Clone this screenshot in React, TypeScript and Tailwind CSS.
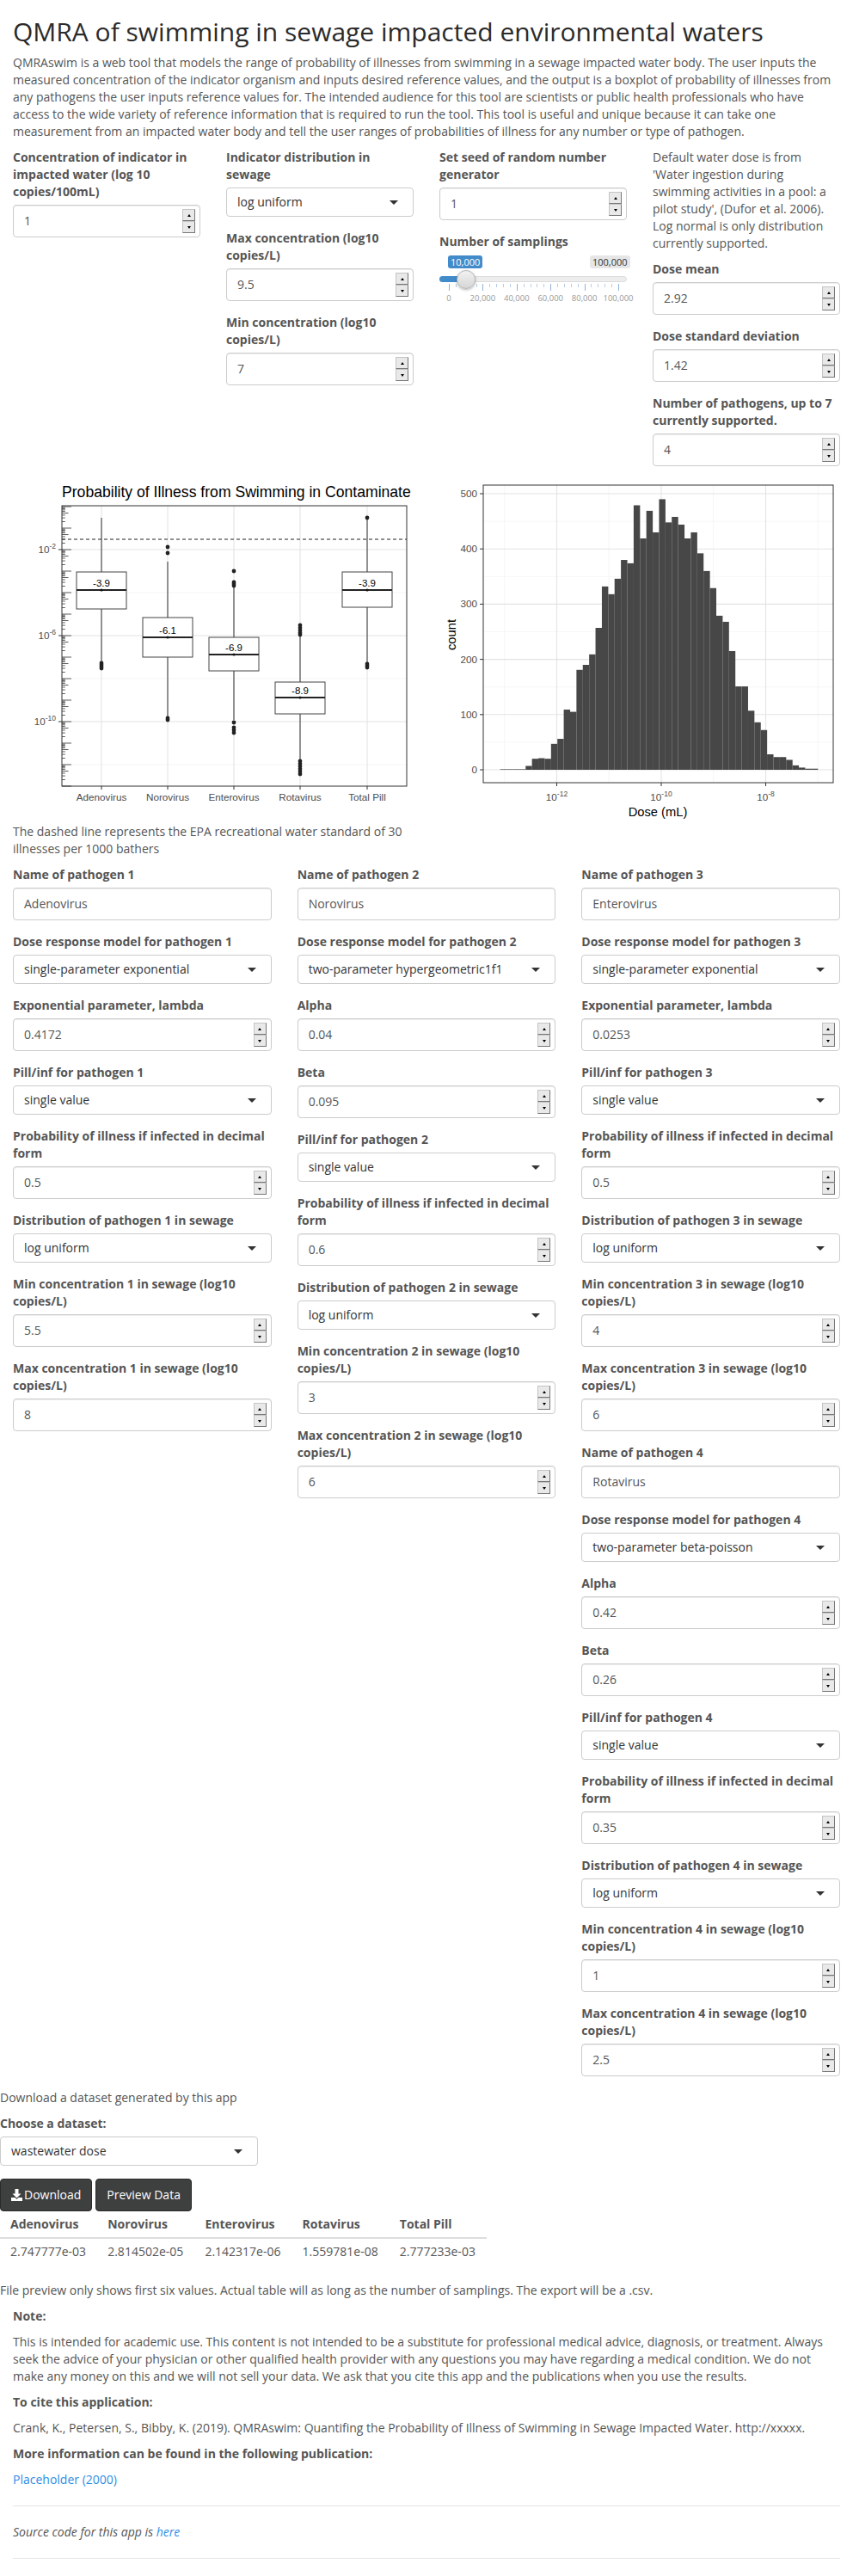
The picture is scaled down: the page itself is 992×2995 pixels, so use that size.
import React from 'react';

type Field = { kind: 'text' | 'num' | 'select'; label: string; value: string };

const Spinner = () => (
  <div className="absolute right-[5px] top-[4px] flex flex-col">
    <span className="w-[15px] h-[14px] flex items-center justify-center bg-[#e9e9e9] border border-[#c4c4c4] border-r-[#777] border-b-[#777]">
      <span className="w-0 h-0 border-x-[2px] border-b-[3px] border-x-transparent border-b-black" />
    </span>
    <span className="w-[15px] h-[14px] flex items-center justify-center bg-[#e9e9e9] border border-[#c4c4c4] border-r-[#777] border-b-[#777]">
      <span className="w-0 h-0 border-x-[2px] border-t-[3px] border-x-transparent border-t-black" />
    </span>
  </div>
);

const FieldLabel = ({ children }: { children: React.ReactNode }) => (
  <label className="block mb-[5px] font-bold text-[#555]">{children}</label>
);

const InputBox = ({ value, spinner }: { value: string; spinner?: boolean }) => (
  <div className="relative h-[38px] flex items-center px-[12px] bg-white border border-[#ccc] rounded-[4px] shadow-[inset_0_1px_1px_rgba(0,0,0,0.075)] text-[#555]">
    {value}
    {spinner && <Spinner />}
  </div>
);

const SelectBox = ({ value }: { value: string }) => (
  <div className="h-[34px] flex items-center justify-between pl-[12px] pr-[17px] bg-white border border-[#ccc] rounded-[4px] text-[#333]">
    <span>{value}</span>
    <span className="w-0 h-0 border-x-[5px] border-t-[5px] border-x-transparent border-t-[#333]" />
  </div>
);

const FormField = ({ f }: { f: Field }) => (
  <div className="mb-[15px]">
    <FieldLabel>{f.label}</FieldLabel>
    {f.kind === 'select' ? <SelectBox value={f.value} /> : <InputBox value={f.value} spinner={f.kind === 'num'} />}
  </div>
);

const col1: Field[] = [
  { kind: 'text', label: 'Name of pathogen 1', value: 'Adenovirus' },
  { kind: 'select', label: 'Dose response model for pathogen 1', value: 'single-parameter exponential' },
  { kind: 'num', label: 'Exponential parameter, lambda', value: '0.4172' },
  { kind: 'select', label: 'Pill/inf for pathogen 1', value: 'single value' },
  { kind: 'num', label: 'Probability of illness if infected in decimal form', value: '0.5' },
  { kind: 'select', label: 'Distribution of pathogen 1 in sewage', value: 'log uniform' },
  { kind: 'num', label: 'Min concentration 1 in sewage (log10 copies/L)', value: '5.5' },
  { kind: 'num', label: 'Max concentration 1 in sewage (log10 copies/L)', value: '8' },
];

const col2: Field[] = [
  { kind: 'text', label: 'Name of pathogen 2', value: 'Norovirus' },
  { kind: 'select', label: 'Dose response model for pathogen 2', value: 'two-parameter hypergeometric1f1' },
  { kind: 'num', label: 'Alpha', value: '0.04' },
  { kind: 'num', label: 'Beta', value: '0.095' },
  { kind: 'select', label: 'Pill/inf for pathogen 2', value: 'single value' },
  { kind: 'num', label: 'Probability of illness if infected in decimal form', value: '0.6' },
  { kind: 'select', label: 'Distribution of pathogen 2 in sewage', value: 'log uniform' },
  { kind: 'num', label: 'Min concentration 2 in sewage (log10 copies/L)', value: '3' },
  { kind: 'num', label: 'Max concentration 2 in sewage (log10 copies/L)', value: '6' },
];

const col3: Field[] = [
  { kind: 'text', label: 'Name of pathogen 3', value: 'Enterovirus' },
  { kind: 'select', label: 'Dose response model for pathogen 3', value: 'single-parameter exponential' },
  { kind: 'num', label: 'Exponential parameter, lambda', value: '0.0253' },
  { kind: 'select', label: 'Pill/inf for pathogen 3', value: 'single value' },
  { kind: 'num', label: 'Probability of illness if infected in decimal form', value: '0.5' },
  { kind: 'select', label: 'Distribution of pathogen 3 in sewage', value: 'log uniform' },
  { kind: 'num', label: 'Min concentration 3 in sewage (log10 copies/L)', value: '4' },
  { kind: 'num', label: 'Max concentration 3 in sewage (log10 copies/L)', value: '6' },
  { kind: 'text', label: 'Name of pathogen 4', value: 'Rotavirus' },
  { kind: 'select', label: 'Dose response model for pathogen 4', value: 'two-parameter beta-poisson' },
  { kind: 'num', label: 'Alpha', value: '0.42' },
  { kind: 'num', label: 'Beta', value: '0.26' },
  { kind: 'select', label: 'Pill/inf for pathogen 4', value: 'single value' },
  { kind: 'num', label: 'Probability of illness if infected in decimal form', value: '0.35' },
  { kind: 'select', label: 'Distribution of pathogen 4 in sewage', value: 'log uniform' },
  { kind: 'num', label: 'Min concentration 4 in sewage (log10 copies/L)', value: '1' },
  { kind: 'num', label: 'Max concentration 4 in sewage (log10 copies/L)', value: '2.5' },
];

// slider: 0..100,000, value 10,000
const SamplingSlider = () => {
  const ticks: React.ReactNode[] = [];
  for (let i = 0; i <= 25; i++) {
    const x = 11 + i * 7.88;
    const major = i % 5 === 0;
    ticks.push(
      <span
        key={i}
        className={major ? 'absolute top-[34px] w-px h-[8px] bg-[#8fb4dc]' : 'absolute top-[34px] w-px h-[4px] bg-[#b6cde6]'}
        style={{ left: x }}
      />
    );
  }
  const labels = ['0', '20,000', '40,000', '60,000', '80,000', '100,000'];
  return (
    <div className="relative h-[60px]">
      <span className="absolute left-[10px] top-[1px] h-[15px] px-[3px] flex items-center rounded-[3px] bg-[#428bca] text-white text-[11px] leading-none">10,000</span>
      <span className="absolute left-[175px] top-[1px] h-[15px] px-[3px] flex items-center rounded-[3px] bg-[#e6e6e6] text-[#333] text-[11px] leading-none">100,000</span>
      <div className="absolute left-0 right-0 top-[25px] h-[7px] rounded-full bg-[#ededed] border border-[#dcdcdc]" />
      <div className="absolute left-0 w-[31px] top-[25px] h-[7px] rounded-l-full bg-[#428bca]" />
      {ticks}
      {labels.map((l, i) => (
        <span key={l} className="absolute top-[45px] w-[50px] -ml-[25px] text-center text-[9.5px] leading-[12px] text-[#999]" style={{ left: 11 + i * 39.4 }}>
          {l}
        </span>
      ))}
      <div className="absolute left-[20px] top-[18px] w-[22px] h-[22px] rounded-full bg-gradient-to-b from-[#f2f2f2] to-[#d6d6d6] border border-[#b5b5b5] shadow-[0_1px_3px_rgba(0,0,0,0.3)]" />
    </div>
  );
};

const SupLabel = ({ x, y, exp, anchor }: { x: number; y: number; exp: string; anchor: 'end' | 'middle' }) => (
  <text x={x} y={y} textAnchor={anchor} fontSize={11.7} fill="#4d4d4d" fontFamily="Liberation Sans, Arial, sans-serif">
    10
    <tspan dy={-5} fontSize={8.5}>
      {exp}
    </tspan>
  </text>
);

type Box = { x: number; top: number; bot: number; med: number; wt: number; wb: number; out: number[]; label: string };

const boxes: Box[] = [
  { x: 103, top: 108, bot: 151, med: 129, wt: 45, wb: 212, out: [214, 216, 218, 220], label: '-3.9' },
  { x: 180, top: 161, bot: 207, med: 184, wt: 96, wb: 276, out: [79, 86, 278, 280], label: '-6.1' },
  { x: 257, top: 184, bot: 223, med: 204, wt: 126, wb: 280, out: [107, 120, 122, 124, 283, 289, 292, 295], label: '-6.9' },
  { x: 334, top: 236, bot: 273, med: 254, wt: 182, wb: 326, out: [170, 173, 176, 179, 181, 328, 331, 334, 337, 340, 343], label: '-8.9' },
  { x: 412, top: 108, bot: 149, med: 129, wt: 45, wb: 213, out: [45, 215, 217, 219], label: '-3.9' },
];

const BoxPlot = () => {
  const LY = (l: number) => 32 - 25 * l;
  const logTicks: React.ReactNode[] = [];
  for (let d = 0; d >= -13; d--) {
    for (let k = 1; k <= 9; k++) {
      const y = LY(d + Math.log10(k));
      if (y < 31 || y > 357) continue;
      const len = k === 1 ? 11 : k === 5 ? 7.5 : 3.8;
      logTicks.push(<line key={`${d}-${k}`} x1={57} x2={57 + len} y1={y} y2={y} stroke="#333" strokeWidth={0.8} />);
    }
  }
  const names = ['Adenovirus', 'Norovirus', 'Enterovirus', 'Rotavirus', 'Total Pill'];
  return (
    <svg width={466} height={400} className="block overflow-hidden">
      <rect x={0} y={0} width={466} height={400} fill="white" />
      <text x={57} y={21} fontSize={17.6} fill="#000" fontFamily="Liberation Sans, Arial, sans-serif">
        Probability of Illness from Swimming in Contaminate
      </text>
      {[32, 132, 232, 332].map((y) => (
        <line key={`mi${y}`} x1={57} x2={458} y1={y} y2={y} stroke="#f0f0f0" strokeWidth={0.6} />
      ))}
      {[82, 182, 282].map((y) => (
        <line key={`ma${y}`} x1={57} x2={458} y1={y} y2={y} stroke="#e3e3e3" strokeWidth={1.1} />
      ))}
      {boxes.map((b) => (
        <line key={`v${b.x}`} x1={b.x} x2={b.x} y1={31} y2={357} stroke="#e3e3e3" strokeWidth={1.1} />
      ))}
      <line x1={57} x2={458} y1={70} y2={70} stroke="#222" strokeWidth={1} strokeDasharray="4 3" />
      {boxes.map((b) => (
        <g key={b.label + b.x}>
          <line x1={b.x} x2={b.x} y1={b.wt} y2={b.top} stroke="#333" strokeWidth={1} />
          <line x1={b.x} x2={b.x} y1={b.bot} y2={b.wb} stroke="#333" strokeWidth={1} />
          <rect x={b.x - 29} y={b.top} width={58} height={b.bot - b.top} fill="white" stroke="#444" strokeWidth={1} />
          <line x1={b.x - 29} x2={b.x + 29} y1={b.med} y2={b.med} stroke="#222" strokeWidth={2} />
          <circle cx={b.x} cy={b.med} r={1.6} fill="#111" />
          {b.out.map((o, i) => (
            <circle key={i} cx={b.x} cy={o} r={2.4} fill="#222" />
          ))}
          <text x={b.x} y={b.med - 4} textAnchor="middle" fontSize={11.5} fill="#000" fontFamily="Liberation Sans, Arial, sans-serif">
            {b.label}
          </text>
        </g>
      ))}
      {logTicks}
      <rect x={57} y={31} width={401} height={326} fill="none" stroke="#333" strokeWidth={1} />
      {boxes.map((b) => (
        <line key={`t${b.x}`} x1={b.x} x2={b.x} y1={357} y2={361} stroke="#333" strokeWidth={1} />
      ))}
      {[82, 182, 282].map((y) => (
        <line key={`yt${y}`} x1={53} x2={57} y1={y} y2={y} stroke="#333" strokeWidth={1} />
      ))}
      <SupLabel x={50} y={86} exp="-2" anchor="end" />
      <SupLabel x={50} y={186} exp="-6" anchor="end" />
      <SupLabel x={50} y={286} exp="-10" anchor="end" />
      {boxes.map((b, i) => (
        <text key={names[i]} x={b.x} y={374} textAnchor="middle" fontSize={11.7} fill="#4d4d4d" fontFamily="Liberation Sans, Arial, sans-serif">
          {names[i]}
        </text>
      ))}
    </svg>
  );
};

const counts = [
  1, 1, 1, 1, 7, 20, 21, 20, 47, 56, 109, 105, 181, 190, 209, 257, 332, 318, 346, 380, 374, 479, 419, 469, 430, 490, 448,
  458, 444, 419, 430, 392, 360, 329, 279, 268, 215, 151, 151, 107, 86, 72, 28, 23, 23, 18, 8, 4, 2, 2,
];

const Histogram = () => {
  const CY = (c: number) => 338 - 0.642 * c;
  const DX = (l: number) => 258 + 60.75 * (l + 10);
  return (
    <svg width={466} height={400} className="block">
      <rect x={0} y={0} width={466} height={400} fill="white" />
      {[50, 150, 250, 350, 450].map((c) => (
        <line key={`hm${c}`} x1={51} x2={458} y1={CY(c)} y2={CY(c)} stroke="#f0f0f0" strokeWidth={0.6} />
      ))}
      {[-13, -11, -9, -7].map((l) => (
        <line key={`vm${l}`} x1={DX(l)} x2={DX(l)} y1={7} y2={353} stroke="#f0f0f0" strokeWidth={0.6} />
      ))}
      {[0, 100, 200, 300, 400, 500].map((c) => (
        <line key={`hM${c}`} x1={51} x2={458} y1={CY(c)} y2={CY(c)} stroke="#e3e3e3" strokeWidth={1.1} />
      ))}
      {[-12, -10, -8].map((l) => (
        <line key={`vM${l}`} x1={DX(l)} x2={DX(l)} y1={7} y2={353} stroke="#e3e3e3" strokeWidth={1.1} />
      ))}
      {counts.map((c, i) => (
        <rect key={i} x={70.7 + i * 7.39} y={CY(c)} width={7.45} height={0.642 * c} fill="#474747" />
      ))}
      <rect x={51} y={7} width={407} height={346} fill="none" stroke="#333" strokeWidth={1} />
      {[0, 100, 200, 300, 400, 500].map((c) => (
        <g key={`yl${c}`}>
          <line x1={47} x2={51} y1={CY(c)} y2={CY(c)} stroke="#333" strokeWidth={1} />
          <text x={44} y={CY(c) + 4} textAnchor="end" fontSize={11.7} fill="#4d4d4d" fontFamily="Liberation Sans, Arial, sans-serif">
            {c}
          </text>
        </g>
      ))}
      {[-12, -10, -8].map((l) => (
        <g key={`xl${l}`}>
          <line x1={DX(l)} x2={DX(l)} y1={353} y2={357} stroke="#333" strokeWidth={1} />
          <SupLabel x={DX(l)} y={374} exp={String(l)} anchor="middle" />
        </g>
      ))}
      <text x={254} y={392} textAnchor="middle" fontSize={14.7} fill="#000" fontFamily="Liberation Sans, Arial, sans-serif">
        Dose (mL)
      </text>
      <text x={19} y={181} textAnchor="middle" fontSize={14.7} fill="#000" fontFamily="Liberation Sans, Arial, sans-serif" transform="rotate(-90 19 181)">
        count
      </text>
    </svg>
  );
};

const DownloadIcon = () => (
  <svg width="13" height="14" viewBox="0 0 13 14" className="mr-[2px]">
    <path d="M4.5 0h4v5.5h3l-5 5-5-5h3z M0 10h4.5l2 2 2-2H13v4H0z" fill="white" />
  </svg>
);

const tableHead = ['Adenovirus', 'Norovirus', 'Enterovirus', 'Rotavirus', 'Total Pill'];
const tableRow = ['2.747777e-03', '2.814502e-05', '2.142317e-06', '1.559781e-08', '2.777233e-03'];

export default function App() {
  return (
    <div className="bg-white font-['Open_Sans',sans-serif] text-[14px] leading-[20px] text-[#555] min-h-[2995px]">
      <div className="px-[15px]">
        <h2 className="mt-[20px] mb-[10px] text-[30px] leading-[33px] text-[#2b2b2b]">QMRA of swimming in sewage impacted environmental waters</h2>
        <p className="mb-[10px]">
          QMRAswim is a web tool that models the range of probability of illnesses from swimming in a sewage impacted water body. The user
          inputs the measured concentration of the indicator organism and inputs desired reference values, and the output is a boxplot of
          probability of illnesses from any pathogens the user inputs reference values for. The intended audience for this tool are scientists
          or public health professionals who have access to the wide variety of reference information that is required to run the tool. This
          tool is useful and unique because it can take one measurement from an impacted water body and tell the user ranges of probabilities
          of illness for any number or type of pathogen.
        </p>

        {/* indicator + dose inputs */}
        <div className="-mx-[15px] grid grid-cols-4 items-start">
          <div className="px-[15px]">
            <FormField f={{ kind: 'num', label: 'Concentration of indicator in impacted water (log 10 copies/100mL)', value: '1' }} />
          </div>
          <div className="px-[15px]">
            <FormField f={{ kind: 'select', label: 'Indicator distribution in sewage', value: 'log uniform' }} />
            <FormField f={{ kind: 'num', label: 'Max concentration (log10 copies/L)', value: '9.5' }} />
            <FormField f={{ kind: 'num', label: 'Min concentration (log10 copies/L)', value: '7' }} />
          </div>
          <div className="px-[15px]">
            <FormField f={{ kind: 'num', label: 'Set seed of random number generator', value: '1' }} />
            <FieldLabel>Number of samplings</FieldLabel>
            <SamplingSlider />
          </div>
          <div className="px-[15px]">
            <p className="mb-[10px]">
              Default water dose is from 'Water ingestion during swimming activities in a pool: a pilot study', (Dufor et al. 2006). Log normal is
              only distribution currently supported.
            </p>
            <FormField f={{ kind: 'num', label: 'Dose mean', value: '2.92' }} />
            <FormField f={{ kind: 'num', label: 'Dose standard deviation', value: '1.42' }} />
            <FormField f={{ kind: 'num', label: 'Number of pathogens, up to 7 currently supported.', value: '4' }} />
          </div>
        </div>

        {/* plots */}
        <div className="-mx-[15px] grid grid-cols-2 items-start">
          <div className="px-[15px]">
            <BoxPlot />
            <p className="mb-[10px]">The dashed line represents the EPA recreational water standard of 30 illnesses per 1000 bathers</p>
          </div>
          <div className="px-[15px]">
            <Histogram />
          </div>
        </div>

        {/* pathogens */}
        <div className="-mx-[15px] grid grid-cols-3 items-start">
          {[col1, col2, col3].map((col, i) => (
            <div key={i} className="px-[15px]">
              {col.map((f, j) => (
                <FormField key={j} f={f} />
              ))}
            </div>
          ))}
        </div>
      </div>

      {/* download */}
      <div>
        <p className="mb-[10px]">Download a dataset generated by this app</p>
        <div className="w-[300px] mb-[15px]">
          <FieldLabel>Choose a dataset:</FieldLabel>
          <SelectBox value="wastewater dose" />
        </div>
        <div className="flex gap-[4px]">
          <button className="h-[38px] px-[12px] flex items-center rounded-[4px] bg-[#3e3f3f] border border-[#2a2a2a] text-white">
            <DownloadIcon />
            Download
          </button>
          <button className="h-[38px] px-[12px] flex items-center rounded-[4px] bg-[#3e3f3f] border border-[#2a2a2a] text-white">Preview Data</button>
        </div>
        <div className="w-[566px] mb-[20px]">
          <div className="grid grid-cols-5 border-b-2 border-[#ddd] font-bold">
            {tableHead.map((h) => (
              <div key={h} className="pl-[12px] py-[5px]">
                {h}
              </div>
            ))}
          </div>
          <div className="grid grid-cols-5">
            {tableRow.map((v) => (
              <div key={v} className="pl-[12px] py-[5px]">
                {v}
              </div>
            ))}
          </div>
        </div>
        <p className="mb-[10px]">File preview only shows first six values. Actual table will as long as the number of samplings. The export will be a .csv.</p>
      </div>

      {/* note */}
      <div className="px-[15px]">
        <p className="mb-[10px] font-bold">Note:</p>
        <p className="mb-[10px]">
          This is intended for academic use. This content is not intended to be a substitute for professional medical advice, diagnosis, or
          treatment. Always seek the advice of your physician or other qualified health provider with any questions you may have regarding a
          medical condition. We do not make any money on this and we will not sell your data. We ask that you cite this app and the
          publications when you use the results.
        </p>
        <p className="mb-[10px] font-bold">To cite this application:</p>
        <p className="mb-[10px]">
          Crank, K., Petersen, S., Bibby, K. (2019). QMRAswim: Quantifing the Probability of Illness of Swimming in Sewage Impacted Water.
          http://xxxxx.
        </p>
        <p className="mb-[10px] font-bold">More information can be found in the following publication:</p>
        <p className="mb-[20px]">
          <a className="text-[#2d8ee6]">Placeholder (2000)</a>
        </p>
        <hr className="border-0 border-t border-[#e5e5e5] mb-[20px]" />
        <p className="mb-[20px] italic">
          Source code for this app is <a className="text-[#2d8ee6]">here</a>
        </p>
        <hr className="border-0 border-t border-[#e5e5e5]" />
      </div>
    </div>
  );
}
